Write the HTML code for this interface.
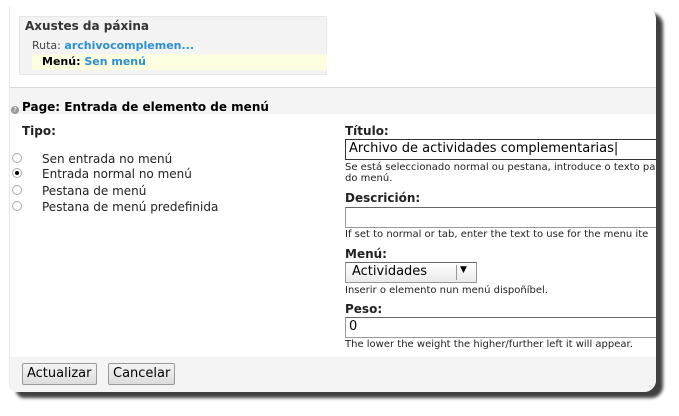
<!DOCTYPE html>
<html><head><meta charset="utf-8"><style>
*{margin:0;padding:0;box-sizing:border-box}
body{width:679px;height:416px;background:#fff;font-family:"DejaVu Sans","Liberation Sans",sans-serif;font-size:11px;color:#000;position:relative;overflow:hidden}
.win{position:absolute;left:9px;top:7px;width:647px;height:385px;background:#fff;border-radius:0 12px 12px 8px;box-shadow:7px 6px 3px rgba(0,0,0,.75);overflow:hidden;border-left:1px solid #e8e8e8}
.a{position:absolute;white-space:nowrap}
.b{font-weight:bold}
.lk{color:#2b8fd0;font-weight:bold}
.inp{position:absolute;border:1px solid #999;border-top-color:#666;background:#fff;font-size:13px;padding:1px 3px}
.rad{position:absolute;width:10px;height:10px;border:1px solid #aaa;border-radius:50%;background:#fff;left:2px}
.btn{position:absolute;top:356px;height:22px;border:1px solid #999;background:linear-gradient(#f4f4f4,#dcdcdc);font-size:13px;padding:2px 4px;border-radius:2px}
.h{font-size:10px;color:#222}
</style></head><body>
<div class="win">
 <div class="a" style="left:9px;top:9px;width:308px;height:59px;background:#f3f3f3;border:1px solid #e6e6e6"></div>
 <div class="a b" style="left:15px;top:12px;font-size:12px;color:#333">Axustes da páxina</div>
 <div class="a" style="left:22px;top:32px;color:#444">Ruta: <span class="lk">archivocomplemen...</span></div>
 <div class="a" style="left:22px;top:47px;width:295px;height:16px;background:#fdfde0"></div>
 <div class="a b" style="left:32px;top:48px">Menú: <span class="lk">Sen menú</span></div>
 <div class="a" style="left:0;top:80px;width:647px;height:27px;background:#f4f4f4;border-top:1px solid #d8d8d8"></div>
 <div class="a" style="left:1px;top:99px;width:8px;height:8px;border-radius:50%;background:#999;color:#fff;font-size:7px;line-height:8px;text-align:center">?</div>
 <div class="a b" style="left:12px;top:93px;font-size:12px">Page: Entrada de elemento de menú</div>
 <div class="a b" style="left:12px;top:117px;font-size:12px;color:#222">Tipo:</div>
 <div class="rad" style="top:146px"></div><div class="a" style="left:32px;top:145px;font-size:12px;color:#222">Sen entrada no menú</div>
 <div class="rad" style="top:161px"><div style="position:absolute;left:2px;top:2px;width:4px;height:4px;border-radius:50%;background:#000"></div></div><div class="a" style="left:32px;top:160px;font-size:12px;color:#222">Entrada normal no menú</div>
 <div class="rad" style="top:178px"></div><div class="a" style="left:32px;top:177px;font-size:12px;color:#222">Pestana de menú</div>
 <div class="rad" style="top:194px"></div><div class="a" style="left:32px;top:193px;font-size:12px;color:#222">Pestana de menú predefinida</div>

 <div class="a b" style="left:335px;top:117px;font-size:12px;color:#222">Título:</div>
 <div class="inp" style="left:335px;top:132px;width:320px;height:21px;border-color:#333">Archivo de actividades complementarias|</div>
 <div class="a h" style="left:335px;top:155px">Se está seleccionado normal ou pestana, introduce o texto pa</div>
 <div class="a h" style="left:335px;top:166px">do menú.</div>
 <div class="a b" style="left:335px;top:184px;font-size:12px;color:#222">Descrición:</div>
 <div class="inp" style="left:335px;top:200px;width:320px;height:21px"></div>
 <div class="a h" style="left:335px;top:222px">If set to normal or tab, enter the text to use for the menu ite</div>
 <div class="a b" style="left:335px;top:240px;font-size:12px;color:#222">Menú:</div>
 <div class="inp" style="left:335px;top:255px;width:132px;height:21px;background:linear-gradient(#fff,#eaeaea);padding-left:6px">Actividades<span style="position:absolute;left:110px;top:2px;height:15px;border-left:1px solid #999"></span><span style="position:absolute;left:114px;top:2px;font-size:9px">▼</span></div>
 <div class="a h" style="left:335px;top:278px">Inserir o elemento nun menú dispoñíbel.</div>
 <div class="a b" style="left:335px;top:295px;font-size:12px;color:#222">Peso:</div>
 <div class="inp" style="left:335px;top:310px;width:320px;height:21px">0</div>
 <div class="a h" style="left:335px;top:332px">The lower the weight the higher/further left it will appear.</div>

 <div class="a" style="left:0;top:350px;width:647px;height:35px;background:#f4f4f4"></div>
 <div class="btn" style="left:12px;width:75px">Actualizar</div>
 <div class="btn" style="left:98px;width:67px">Cancelar</div>
</div>
</body></html>
